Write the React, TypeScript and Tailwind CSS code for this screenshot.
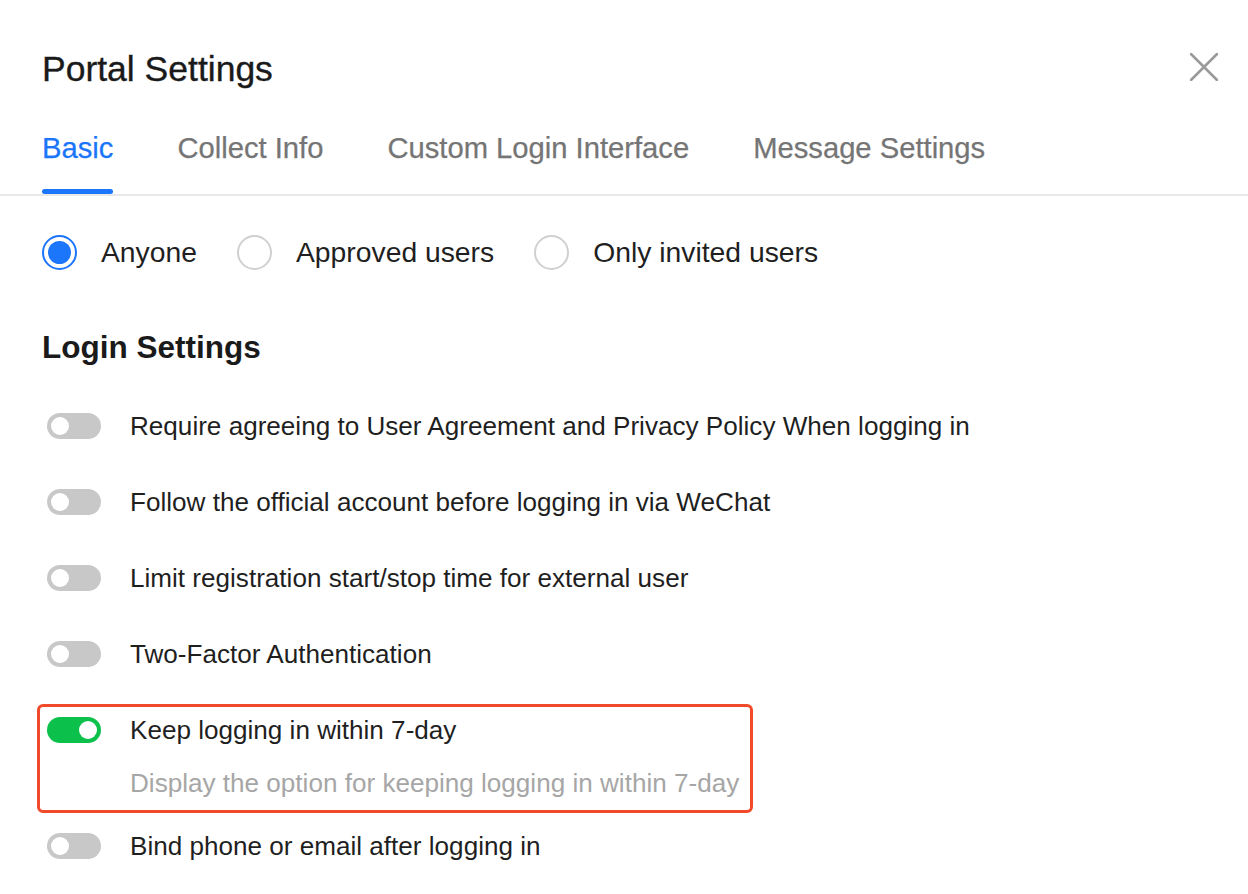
import React from 'react';

const tabs = ['Basic', 'Collect Info', 'Custom Login Interface', 'Message Settings'];

const audiences = [
  { label: 'Anyone', checked: true },
  { label: 'Approved users', checked: false },
  { label: 'Only invited users', checked: false },
];

const loginOptions = [
  { label: 'Require agreeing to User Agreement and Privacy Policy When logging in', on: false },
  { label: 'Follow the official account before logging in via WeChat', on: false },
  { label: 'Limit registration start/stop time for external user', on: false },
  { label: 'Two-Factor Authentication', on: false },
  {
    label: 'Keep logging in within 7-day',
    on: true,
    hint: 'Display the option for keeping logging in within 7-day',
    highlight: true,
  },
  { label: 'Bind phone or email after logging in', on: false },
];

function Toggle({ on }: { on: boolean }) {
  return (
    <span
      className={`flex h-[26px] w-[54px] shrink-0 items-center rounded-full px-[4px] ${
        on ? 'justify-end bg-[#0bc04b]' : 'justify-start bg-[#c8c8c8]'
      }`}
    >
      <span className="h-[18px] w-[18px] rounded-full bg-white" />
    </span>
  );
}

function Radio({ checked }: { checked: boolean }) {
  return (
    <span
      className={`flex h-[35px] w-[35px] shrink-0 items-center justify-center rounded-full border-2 ${
        checked ? 'border-[#1b76fb]' : 'border-[#d0d0d0]'
      }`}
    >
      {checked && <span className="h-[23px] w-[23px] rounded-full bg-[#1b76fb]" />}
    </span>
  );
}

export default function App() {
  return (
    <div
      className="min-h-[894px] w-full bg-white text-[#1f1f1f]"
      style={{ fontFamily: '"Liberation Sans", Arial, Helvetica, sans-serif' }}
    >
      {/* Header */}
      <div className="flex items-start justify-between pl-[42px] pr-[30px] pt-[52px]">
        <h1 className="text-[35.5px] leading-[35px] text-[#1a1a1a] [-webkit-text-stroke:0.35px_currentColor]">
          Portal Settings
        </h1>
        <button className="mt-[1px] text-[#9a9a9a]" aria-label="Close">
          <svg width="28" height="28" viewBox="0 0 28 28" fill="none">
            <path d="M1 1 27 27M27 1 1 27" stroke="currentColor" strokeWidth="2.6" strokeLinecap="round" />
          </svg>
        </button>
      </div>

      {/* Tabs */}
      <div className="mt-[47px] flex gap-[64px] border-b-2 border-[#e8e8e8] pl-[42px]">
        {tabs.map((tab, i) => (
          <div key={tab} className="flex flex-col">
            <span
              className={`text-[29.2px] leading-[29px] [-webkit-text-stroke:0.25px_currentColor] ${
                i === 0 ? 'text-[#1b76fb]' : 'text-[#757575]'
              }`}
            >
              {tab}
            </span>
            <span
              className={`mt-[26px] h-[5px] rounded-full ${i === 0 ? 'bg-[#1b76fb]' : 'bg-transparent'}`}
            />
          </div>
        ))}
      </div>

      {/* Who can access */}
      <div className="mt-[38px] flex items-center pl-[42px]">
        {audiences.map((a) => (
          <label key={a.label} className="mr-[40px] flex h-[36px] items-center gap-[24px]">
            <Radio checked={a.checked} />
            <span className="text-[28.3px] leading-[36px]">{a.label}</span>
          </label>
        ))}
      </div>

      {/* Login settings */}
      <h2 className="mt-[62px] pl-[42px] text-[31.5px] font-bold leading-[30px] text-[#1a1a1a]">
        Login Settings
      </h2>

      <div className="mt-[38px] flex flex-col items-start gap-[20px] pl-[37px]">
        {loginOptions.map((opt, i) => (
          <div
            key={opt.label}
            className={`flex items-start gap-[29px] rounded-[6px] border-[3px] pb-[9px] pl-[7px] pr-[11px] pt-[5px] ${
              opt.highlight ? 'border-[#f04a2a]' : 'border-transparent'
            } ${i === loginOptions.length - 1 ? '-mt-[13px]' : ''}`}
          >
            <span className="flex h-[36px] items-center">
              <Toggle on={opt.on} />
            </span>
            <div className="flex flex-col">
              <span className="text-[26.1px] leading-[36px]">{opt.label}</span>
              {opt.hint && (
                <span className="mt-[17px] text-[26.1px] leading-[36px] text-[#a6a6a6]">{opt.hint}</span>
              )}
            </div>
          </div>
        ))}
      </div>
    </div>
  );
}
